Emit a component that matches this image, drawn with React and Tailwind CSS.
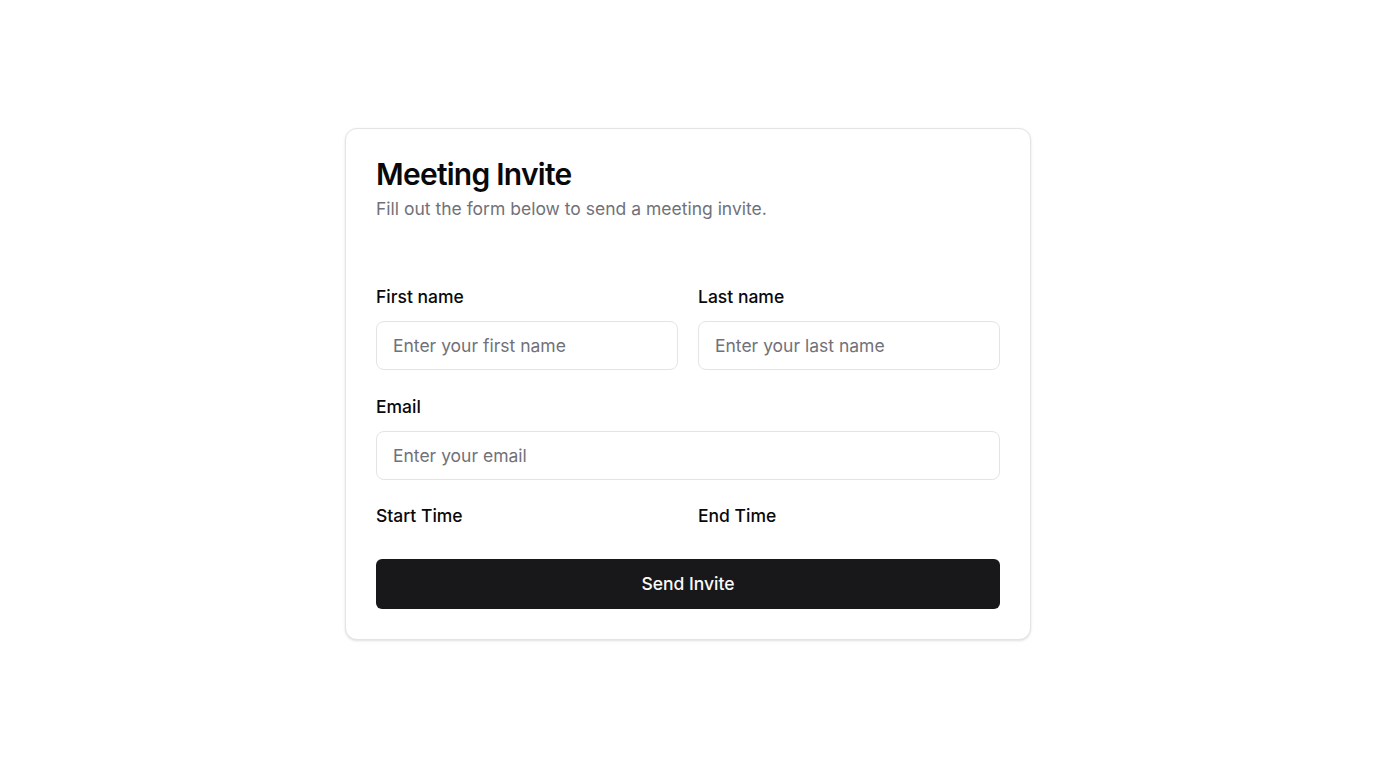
import React from 'react'

function Field({ label, placeholder, className = '' }) {
  return (
    <div className={`flex flex-col ${className}`}>
      <label className="text-[17.5px] leading-[28px] font-medium text-[#09090b]">{label}</label>
      <input
        className="mt-[10px] h-[49px] w-full rounded-lg border border-[#e4e4e7] px-4 text-[17.5px] text-[#09090b] placeholder:text-[#71717a] outline-none"
        placeholder={placeholder}
      />
    </div>
  )
}

export default function App() {
  return (
    <div className="min-h-screen bg-white pt-[128px] font-['Inter',sans-serif]">
      <div className="mx-auto w-[686px] rounded-xl border border-[#e4e4e7] bg-white p-[30px] shadow-sm">
        <h1 className="text-[30px] leading-[30px] font-semibold tracking-tight text-[#09090b]">Meeting Invite</h1>
        <p className="mt-[6px] text-[17.5px] leading-[28px] text-[#71717a]">Fill out the form below to send a meeting invite.</p>

        <div className="mt-[60px] flex flex-col">
          <div className="grid grid-cols-2 gap-5">
            <Field label="First name" placeholder="Enter your first name" />
            <Field label="Last name" placeholder="Enter your last name" />
          </div>
          <Field className="mt-[23px]" label="Email" placeholder="Enter your email" />
          <div className="mt-[22px] grid grid-cols-2 gap-5">
            <label className="text-[17.5px] leading-[28px] font-medium text-[#09090b]">Start Time</label>
            <label className="text-[17.5px] leading-[28px] font-medium text-[#09090b]">End Time</label>
          </div>
        </div>

        <button className="mt-[29px] h-[50px] w-full rounded-md bg-[#18181b] text-[17.5px] font-medium text-[#fafafa]">
          Send Invite
        </button>
      </div>
    </div>
  )
}
